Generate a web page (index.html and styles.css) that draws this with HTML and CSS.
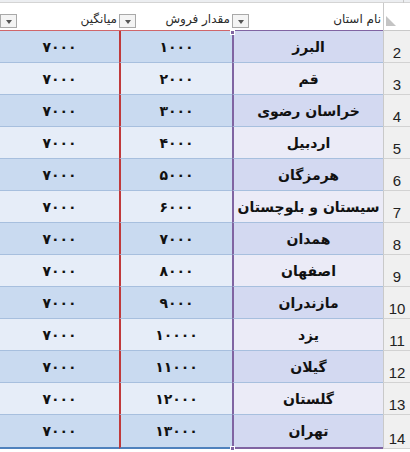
FILE: index.html
```html
<!DOCTYPE html>
<html lang="fa">
<head>
<meta charset="utf-8">
<link rel="stylesheet" href="styles.css">
</head>
<body>
<div class="sheet">
  <div class="topstrip"><span class="topcell"></span></div>
  <div class="grid">
    <div class="corner"><span class="tri"></span></div>
    <div class="hcell hc"><span class="htext">نام استان</span><span class="dd"></span></div>
    <div class="hcell hb"><span class="htext">مقدار فروش</span><span class="dd"></span></div>
    <div class="hcell ha"><span class="htext">میانگین</span><span class="dd"></span></div>
  </div>
  <div class="body" id="rows"></div>
  <span class="handle top"></span>
  <span class="handle bottom"></span>
</div>
<script>
const names=["البرز","قم","خراسان رضوی","اردبیل","هرمزگان","سیستان و بلوچستان","همدان","اصفهان","مازندران","یزد","گیلان","گلستان","تهران"];
const fa=n=>String(n).replace(/\d/g,d=>"۰۱۲۳۴۵۶۷۸۹"[d]);
const host=document.getElementById("rows");
names.forEach((n,i)=>{
  const r=document.createElement("div");
  r.className="grid row "+(i%2===0?"dark":"light")+(i===names.length-1?" last":"");
  r.innerHTML='<div class="num">'+(i+2)+'</div><div class="cell c">'+n+'</div><div class="cell b">'+fa((i+1)*1000)+'</div><div class="cell a">'+fa(7000)+'</div>';
  host.appendChild(r);
});
</script>
</body>
</html>
```

FILE: styles.css
```css
* { box-sizing: border-box; margin: 0; padding: 0; }
html, body { background: #ffffff; }
body { width: 410px; height: 452px; overflow: hidden; font-family: "DejaVu Sans", sans-serif; }
.sheet { position: relative; width: 410px; }
.topstrip { height: 3px; background: #eceef1; border-bottom: 1px solid #d4d4d4; position: relative; }
.topcell { position: absolute; left: 403px; top: 0; width: 1px; height: 3px; background: #c8c8c8; }
.grid { display: grid; direction: rtl; grid-template-columns: 27px 151px 113px 119px; }
.corner { height: 28px; background: #ffffff; border-left: 1px solid #c9c9c9; border-bottom: 1px solid #c9c9c9; position: relative; }
.tri { position: absolute; left: 2px; bottom: 4px; width: 0; height: 0; border-bottom: 10px solid #c4c4c4; border-right: 10px solid transparent; }
.hcell { height: 28px; display: flex; align-items: flex-end; justify-content: space-between; padding: 0 2px 3px 0; background: #ffffff; }
.hc { border-bottom: 1px solid #8064a2; }
.hb, .ha { border-bottom: 1px solid #d0666a; }
.htext { font-size: 12px; color: #2a2a2a; line-height: 14px; margin-bottom: 1px; }
.dd { width: 17px; height: 14px; background: #f4f4f4; border: 1px solid #a9a9a9; position: relative; margin-bottom: -1px; }
.dd::after { content: ""; position: absolute; left: 5px; top: 5px; border-top: 4px solid #555; border-left: 3.5px solid transparent; border-right: 3.5px solid transparent; }
.row { height: 32px; }
.num { background: #f0f0f0; border-left: 1px solid #c9c9c9; border-bottom: 1px solid #d2d2d2; font-family: "Liberation Sans", Arial, sans-serif; font-size: 15px; color: #222; display: flex; align-items: flex-end; justify-content: center; padding-bottom: 2px; line-height: 15px; }
.cell { display: flex; align-items: center; justify-content: center; font-weight: bold; font-size: 14px; color: #111; border-bottom: 1px solid #a7bfde; }
.c { border-left: 2px solid #8064a2; }
.b { border-left: 2px solid #c0393b; }
.dark .a, .dark .b { background: #c9daf0; }
.light .a, .light .b { background: #e6edf8; }
.dark .c { background: #d3d9f1; }
.light .c { background: #ebebf7; }
.last .a, .last .b { border-bottom: 2px solid #4f81bd; }
.last .c { border-bottom: 2px solid #8064a2; }
.last { height: 34px; }
.handle { position: absolute; left: 230px; width: 5px; height: 5px; background: #8064a2; border: 1px solid #fff; }
.handle.top { top: 30px; }
.handle.bottom { top: 446px; }
```
